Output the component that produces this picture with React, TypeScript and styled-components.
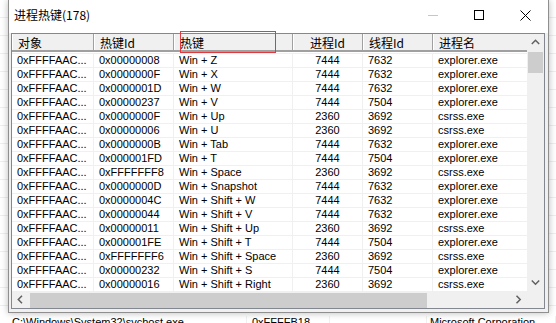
import React from 'react';
import styled, { createGlobalStyle, css } from 'styled-components';

const GlobalStyle = createGlobalStyle`
  html, body {
    margin: 0;
    padding: 0;
    background: #fff;
  }
  body {
    font-family: "Liberation Sans", "Noto Sans CJK SC", sans-serif;
    font-size: 11px;
    color: #000;
  }
`;

const CJK = `"Noto Sans CJK SC", "Liberation Sans", sans-serif`;

const Desktop = styled.div`
  width: 556px;
  height: 323px;
  overflow: hidden;
  display: flex;
  flex-direction: column;
  background: #fff
    repeating-linear-gradient(to bottom, transparent 0 17px, #efefef 17px 18px);
`;

const Dialog = styled.div`
  position: relative;
  z-index: 1;
  flex: none;
  width: 541px;
  margin-left: 8px;
  box-sizing: border-box;
  border: 1px solid #8f8f8f;
  border-top: 0;
  background: #f0f0f0;
  box-shadow: 0 0 7px rgba(0, 0, 0, 0.28);
`;

const TitleBar = styled.div`
  height: 33px;
  display: flex;
  align-items: center;
  background: #fff;
`;

const Title = styled.div`
  flex: 1;
  padding-left: 5px;
  margin-top: -3px;
  font-family: ${CJK};
  font-size: 12px;
  line-height: 16px;
`;

const CaptionButton = styled.div`
  width: 46px;
  height: 33px;
  display: flex;
  align-items: center;
  justify-content: center;
  padding-bottom: 3px;
  box-sizing: border-box;
`;

const Body = styled.div`
  padding: 0 3px 3px 2px;
`;

const ListFrame = styled.div`
  border: 1px solid #828790;
  background: #fff;
  display: grid;
  grid-template-columns: 1fr 17px;
  grid-template-rows: 257px 17px;
`;

const Viewport = styled.div`
  overflow: hidden;
  min-width: 0;
`;

const HeaderRow = styled.div`
  display: flex;
  height: 16px;
  border-bottom: 2px solid #a0a0a0;
  margin-bottom: 1px;
  background: #f0f0f0;
`;

const HeaderCell = styled.div<{ $w: number; $align?: 'left' | 'center' }>`
  flex: none;
  width: ${({ $w }) => $w}px;
  box-sizing: border-box;
  padding: 1px 6px 0 6px;
  border-right: 1px solid #a0a0a0;
  box-shadow: inset 1px 0 0 #fff;
  font-family: ${CJK};
  font-size: 12px;
  line-height: 15px;
  white-space: nowrap;
  overflow: hidden;
  text-align: ${({ $align }) => $align ?? 'left'};
`;

const Row = styled.div`
  display: flex;
  height: 14px;
  box-sizing: border-box;
  border-top: 1px solid #f0f0f0;
`;

const Cell = styled.div<{ $w: number; $align?: 'left' | 'center' }>`
  flex: none;
  width: ${({ $w }) => $w}px;
  box-sizing: border-box;
  padding: 0 5px;
  border-right: 1px solid #f0f0f0;
  line-height: 13px;
  white-space: nowrap;
  overflow: hidden;
  text-align: ${({ $align }) => $align ?? 'left'};
`;

const ScrollTrack = styled.div<{ $dir: 'v' | 'h' }>`
  background: #f0f0f0;
  display: flex;
  ${({ $dir }) =>
    $dir === 'v'
      ? css`
          flex-direction: column;
        `
      : css`
          flex-direction: row;
          align-items: center;
        `}
`;

const ArrowButton = styled.div`
  flex: none;
  width: 17px;
  height: 17px;
  display: flex;
  align-items: center;
  justify-content: center;
`;

const Thumb = styled.div<{ $dir: 'v' | 'h'; $size: number }>`
  flex: none;
  background: #cdcdcd;
  ${({ $dir, $size }) =>
    $dir === 'v'
      ? css`
          height: ${$size}px;
          margin: 1px 1px 0 1px;
        `
      : css`
          width: ${$size}px;
          height: 15px;
          margin-left: 1px;
          margin-top: 1px;
        `}
`;

const Spacer = styled.div`
  flex: 1;
`;

const Corner = styled.div`
  background: #f0f0f0;
`;

const DragFrame = styled.div`
  position: absolute;
  left: 171px;
  top: 31px;
  width: 96px;
  height: 22px;
  box-sizing: border-box;
  border: 1px solid #e0393e;
  border-top-color: #6f6f6f;
  pointer-events: none;
`;

const BgRow = styled.div`
  display: flex;
  height: 14px;
  padding-top: 3px;
  flex: none;
`;

const BgCell = styled.div<{ $w: number; $pad?: number; $align?: 'left' | 'center' }>`
  flex: none;
  width: ${({ $w }) => $w}px;
  box-sizing: border-box;
  padding-left: ${({ $pad }) => $pad ?? 5}px;
  border-right: 1px solid #f0f0f0;
  line-height: 13px;
  white-space: nowrap;
  overflow: hidden;
  text-align: ${({ $align }) => $align ?? 'left'};
`;

const Chevron = ({ dir }: { dir: 'up' | 'down' | 'left' | 'right' }) => {
  const d = {
    up: 'M0.8 5 L4.5 1.3 L8.2 5',
    down: 'M0.8 1.5 L4.5 5.2 L8.2 1.5',
    left: 'M5 0.8 L1.3 4.5 L5 8.2',
    right: 'M1.5 0.8 L5.2 4.5 L1.5 8.2',
  }[dir];
  const vertical = dir === 'up' || dir === 'down';
  return (
    <svg
      width={vertical ? 9 : 7}
      height={vertical ? 7 : 9}
      viewBox={vertical ? '0 0 9 7' : '0 0 7 9'}
    >
      <path d={d} stroke="#606060" strokeWidth="1.5" fill="none" />
    </svg>
  );
};

const columns = [
  { title: '对象', w: 82 },
  { title: '热键Id', w: 80 },
  { title: '热键', w: 119 },
  { title: '进程Id', w: 70, align: 'center' as const },
  { title: '线程Id', w: 70 },
  { title: '进程名', w: 200 },
];

const rows: [string, string, string, string, string][] = [
  ['0x00000008', 'Win + Z', '7444', '7632', 'explorer.exe'],
  ['0x0000000F', 'Win + X', '7444', '7632', 'explorer.exe'],
  ['0x0000001D', 'Win + W', '7444', '7632', 'explorer.exe'],
  ['0x00000237', 'Win + V', '7444', '7504', 'explorer.exe'],
  ['0x0000000F', 'Win + Up', '2360', '3692', 'csrss.exe'],
  ['0x00000006', 'Win + U', '2360', '3692', 'csrss.exe'],
  ['0x0000000B', 'Win + Tab', '7444', '7632', 'explorer.exe'],
  ['0x000001FD', 'Win + T', '7444', '7504', 'explorer.exe'],
  ['0xFFFFFFF8', 'Win + Space', '2360', '3692', 'csrss.exe'],
  ['0x0000000D', 'Win + Snapshot', '7444', '7632', 'explorer.exe'],
  ['0x0000004C', 'Win + Shift + W', '7444', '7632', 'explorer.exe'],
  ['0x00000044', 'Win + Shift + V', '7444', '7632', 'explorer.exe'],
  ['0x00000011', 'Win + Shift + Up', '2360', '3692', 'csrss.exe'],
  ['0x000001FE', 'Win + Shift + T', '7444', '7504', 'explorer.exe'],
  ['0xFFFFFFF6', 'Win + Shift + Space', '2360', '3692', 'csrss.exe'],
  ['0x00000232', 'Win + Shift + S', '7444', '7504', 'explorer.exe'],
  ['0x00000016', 'Win + Shift + Right', '2360', '3692', 'csrss.exe'],
];

export default function App() {
  return (
    <>
      <GlobalStyle />
      <Desktop>
        <Dialog>
          <TitleBar>
            <Title>进程热键(178)</Title>
            <CaptionButton>
              <svg width="10" height="1">
                <rect width="10" height="1" fill="#c6c6c6" />
              </svg>
            </CaptionButton>
            <CaptionButton>
              <svg width="10" height="10">
                <rect x="0.5" y="0.5" width="9" height="9" stroke="#000" fill="none" />
              </svg>
            </CaptionButton>
            <CaptionButton>
              <svg width="11" height="11">
                <path d="M0.5 0.5L10.5 10.5M10.5 0.5L0.5 10.5" stroke="#000" strokeWidth="1" />
              </svg>
            </CaptionButton>
          </TitleBar>
          <Body>
            <ListFrame>
              <Viewport>
                <HeaderRow>
                  {columns.map((c) => (
                    <HeaderCell key={c.title} $w={c.w} $align={c.align}>
                      {c.title}
                    </HeaderCell>
                  ))}
                </HeaderRow>
                {rows.map((r, i) => (
                  <Row key={i}>
                    <Cell $w={82}>0xFFFFAAC...</Cell>
                    <Cell $w={80}>{r[0]}</Cell>
                    <Cell $w={119}>{r[1]}</Cell>
                    <Cell $w={70} $align="center">
                      {r[2]}
                    </Cell>
                    <Cell $w={70}>{r[3]}</Cell>
                    <Cell $w={200}>{r[4]}</Cell>
                  </Row>
                ))}
              </Viewport>
              <ScrollTrack $dir="v">
                <ArrowButton>
                  <Chevron dir="up" />
                </ArrowButton>
                <Thumb $dir="v" $size={21} />
                <Spacer />
                <ArrowButton>
                  <Chevron dir="down" />
                </ArrowButton>
              </ScrollTrack>
              <ScrollTrack $dir="h">
                <ArrowButton>
                  <Chevron dir="left" />
                </ArrowButton>
                <Thumb $dir="h" $size={397} />
                <Spacer />
                <ArrowButton>
                  <Chevron dir="right" />
                </ArrowButton>
              </ScrollTrack>
              <Corner />
            </ListFrame>
          </Body>
          <DragFrame />
        </Dialog>
        <BgRow>
          <BgCell $w={247} $pad={12}>
            C:\Windows\System32\svchost.exe
          </BgCell>
          <BgCell $w={83}>0xFFFFB18...</BgCell>
          <BgCell $w={97} $pad={0} $align="center">
            -
          </BgCell>
          <BgCell $w={129} $pad={3}>
            Microsoft Corporation
          </BgCell>
        </BgRow>
      </Desktop>
    </>
  );
}
